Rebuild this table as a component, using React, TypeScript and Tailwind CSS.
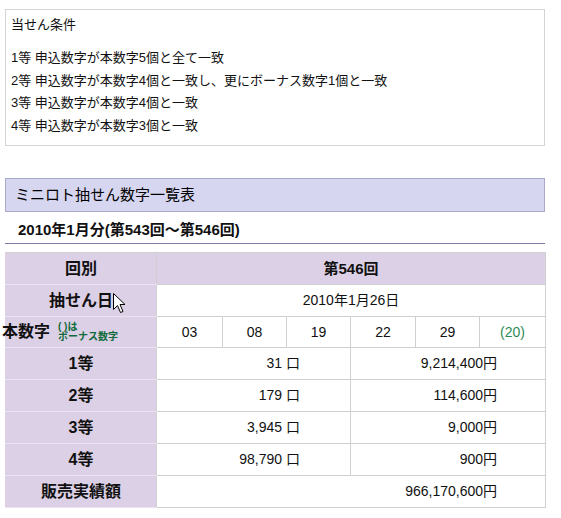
import React from "react";

const FONT = { fontFamily: '"Liberation Sans", "Noto Sans CJK JP", sans-serif' };

const numbers = ["03", "08", "19", "22", "29"];

const prizes = [
  { grade: "1等", count: "31", amount: "9,214,400" },
  { grade: "2等", count: "179", amount: "114,600" },
  { grade: "3等", count: "3,945", amount: "9,000" },
  { grade: "4等", count: "98,790", amount: "900" },
];

const conditions = [
  "1等 申込数字が本数字5個と全て一致",
  "2等 申込数字が本数字4個と一致し、更にボーナス数字1個と一致",
  "3等 申込数字が本数字4個と一致",
  "4等 申込数字が本数字3個と一致",
];

function Cursor() {
  return (
    <svg className="absolute left-[113px] top-[293px]" width="13" height="21" viewBox="0 0 13 21">
      <path d="M0.5 0.5 L0.5 16.5 L4.5 12.5 L7.5 19.5 L10 18.5 L7 11.5 L12 11.5 Z" fill="#fff" stroke="#000" strokeWidth="1" />
    </svg>
  );
}

export default function App() {
  const label = "bg-[#dcd0e6] border border-[#d0d0d0] border-l-[#dcd0e6] border-b-[#ebe3f0] text-center font-bold text-[16px] text-[#111]";
  const cell = "border border-[#d0d0d0] bg-white text-[14px]";

  return (
    <div className="relative w-[561px] h-[518px] bg-white overflow-hidden text-[#111]" style={FONT}>
      {/* 当せん条件 */}
      <div className="ml-[5px] mt-[9px] w-[540px] border border-[#d4d4d4] pl-[5px] pt-[4px] pb-[8px] text-[13px]">
        <div className="leading-[22px]">当せん条件</div>
        <div className="mt-[11px]">
          {conditions.map((c) => (
            <div key={c} className="leading-[22.6px]">{c}</div>
          ))}
        </div>
      </div>

      {/* 見出し */}
      <div className="ml-[5px] mt-[32px] w-[540px] h-[34px] border border-[#a9a9c9] bg-[#d6d6f0] pl-[9px] flex items-center text-[15px] text-black">
        ミニロト抽せん数字一覧表
      </div>

      <div className="ml-[5px] mt-[8px] w-[540px] border-b border-[#7c7ca4] pl-[13px] pb-[3px] text-[15px] font-bold leading-[20px]">
        2010年1月分(第543回～第546回)
      </div>

      {/* 一覧表 */}
      <table className="ml-[5px] mt-[8px] w-[540px] table-fixed border-collapse">
        <colgroup>
          <col className="w-[151px]" />
          <col className="w-[66px]" />
          <col className="w-[64px]" />
          <col className="w-[64px]" />
          <col className="w-[65px]" />
          <col className="w-[64px]" />
          <col className="w-[66px]" />
        </colgroup>
        <tbody>
          <tr className="h-[32px]">
            <td className={label}>回別</td>
            <td colSpan={6} className="bg-[#dcd0e6] border border-[#d0d0d0] text-center font-bold text-[15px]">第546回</td>
          </tr>
          <tr className="h-[32px]">
            <td className={label}>抽せん日</td>
            <td colSpan={6} className={cell + " text-center"}>2010年1月26日</td>
          </tr>
          <tr className="h-[31px]">
            <td className={label + " overflow-visible"}>
              <div className="flex items-center ml-[-4px] whitespace-nowrap">
                <span>本数字</span>
                <span className="ml-[8px] flex flex-col items-start text-[10px] leading-[10px] font-bold text-[#0e6a3a] text-left">
                  <span>(&nbsp;)は</span>
                  <span>ボーナス数字</span>
                </span>
              </div>
            </td>
            {numbers.map((n) => (
              <td key={n} className={cell + " text-center text-[#111]"}>{n}</td>
            ))}
            <td className={cell + " text-center text-[#2f8a56]"}>(20)</td>
          </tr>
          {prizes.map((p) => (
            <tr key={p.grade} className="h-[32px]">
              <td className={label}>{p.grade}</td>
              <td colSpan={3} className={cell + " text-right pr-[50px] text-[#111]"}>{p.count}&nbsp;口</td>
              <td colSpan={3} className={cell + " text-right pr-[48px] text-[#111]"}>{p.amount}円</td>
            </tr>
          ))}
          <tr className="h-[32px]">
            <td className={label + " border-b-[#d0d0d0]"}>販売実績額</td>
            <td colSpan={6} className={cell + " text-right pr-[48px] text-[#111]"}>966,170,600円</td>
          </tr>
        </tbody>
      </table>

      <Cursor />
    </div>
  );
}
